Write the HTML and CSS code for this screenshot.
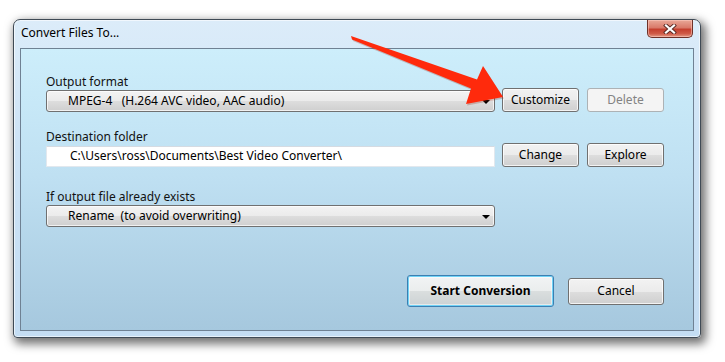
FILE: index.html
```html
<!DOCTYPE html>
<html>
<head>
<meta charset="utf-8">
<link rel="stylesheet" href="styles.css">
</head>
<body>
<div class="window">
  <div class="titlebar">
    <span class="title">Convert Files To...</span>
    <div class="close">
      <svg width="14" height="10" viewBox="0 0 14 10">
        <path d="M3 1.5 L11 8.5 M11 1.5 L3 8.5" stroke="#5a2a24" stroke-width="4" stroke-linecap="square" fill="none"/>
        <path d="M3 1.5 L11 8.5 M11 1.5 L3 8.5" stroke="#ffffff" stroke-width="2.2" stroke-linecap="square" fill="none"/>
      </svg>
    </div>
  </div>
  <div class="panel">
    <div class="label">Output format</div>
    <div class="row">
      <div class="combo"><span class="combo-text">MPEG-4   (H.264 AVC video, AAC audio)</span><span class="caret"></span></div>
      <button class="btn">Customize</button>
      <button class="btn disabled">Delete</button>
    </div>

    <div class="label second">Destination folder</div>
    <div class="row">
      <div class="input">C:\Users\ross\Documents\Best Video Converter\</div>
      <button class="btn">Change</button>
      <button class="btn">Explore</button>
    </div>

    <div class="label third">If output file already exists</div>
    <div class="row single">
      <div class="combo"><span class="combo-text">Rename  (to avoid overwriting)</span><span class="caret"></span></div>
    </div>

    <div class="actions">
      <button class="btn primary">Start Conversion</button>
      <button class="btn cancel">Cancel</button>
    </div>
  </div>
</div>
<svg class="arrow" width="725" height="362" viewBox="0 0 725 362">
  <polygon points="351,36 352,39.5 471,88.5 466,104 503,97 483,66 477,79.5" fill="#8a1a08" opacity="0.25" transform="translate(1,1.5)"/>
  <polygon points="351,36 352,39.5 471,88.5 466,104 503,97 483,66 477,79.5" fill="#ff2a0c"/>
</svg>
</body>
</html>
```

FILE: styles.css
```css
html, body {
  margin: 0;
  padding: 0;
  background: #ffffff;
}

body {
  position: relative;
  width: 725px;
  height: 362px;
  overflow: hidden;
  font-family: "Noto Sans", "Open Sans", "DejaVu Sans", sans-serif;
  font-size: 12px;
  color: #111;
}

.window {
  box-sizing: border-box;
  margin: 19px 0 0 13px;
  width: 688px;
  height: 319px;
  border: 1px solid #3f4a55;
  border-radius: 7px 7px 4px 4px;
  background: linear-gradient(180deg, #dcecf9 0%, #cde3f6 40%, #c4ddf3 100%);
  box-shadow: 3px 4px 10px 2px rgba(0, 0, 0, 0.55), inset 0 0 0 1px rgba(255,255,255,0.6);
  padding: 0 6px 6px 6px;
  display: flex;
  flex-direction: column;
}

.titlebar {
  height: 28px;
  display: flex;
  justify-content: space-between;
  align-items: flex-start;
}

.title {
  margin: 6px 0 0 1px;
  line-height: 14px;
  color: #000;
}

.close {
  box-sizing: border-box;
  width: 46px;
  height: 18px;
  margin-right: 1px;
  border: 1px solid #6e3128;
  border-top: none;
  border-radius: 0 0 5px 5px;
  background: linear-gradient(180deg, #e9a898 0%, #d97a6a 45%, #c5402f 55%, #cf5a47 80%, #e39a86 100%);
  box-shadow: inset 0 0 0 1px rgba(255, 210, 200, 0.5);
  display: flex;
  align-items: center;
  justify-content: center;
}

.close svg { display: block; }

.panel {
  flex: 1;
  box-sizing: border-box;
  border: 1px solid #6f8193;
  background: linear-gradient(180deg, #cdeefb 0%, #bfe0f2 45%, #a6c8de 100%);
  padding: 26px 29px 0 25px;
}

.label {
  height: 13px;
  line-height: 14px;
  white-space: pre;
}

.label.second { margin-top: 18px; }
.label.third { margin-top: 23px; }

.row {
  display: flex;
  align-items: flex-end;
  gap: 7px;
}

.row .btn + .btn { margin-left: 1px; }

.row.single { margin-top: 2px; }

.combo {
  box-sizing: border-box;
  width: 449px;
  height: 22px;
  border: 1px solid #707070;
  border-radius: 3px;
  background: linear-gradient(180deg, #f3f3f3 0%, #ebebeb 50%, #dddddd 51%, #cfcfcf 100%);
  box-shadow: inset 0 0 0 1px rgba(255,255,255,0.7);
  display: flex;
  align-items: center;
  justify-content: space-between;
  padding: 0 4px 0 21px;
}

.combo-text {
  white-space: pre;
  line-height: 14px;
  color: #000;
}

.caret {
  width: 0;
  height: 0;
  border-left: 4px solid transparent;
  border-right: 4px solid transparent;
  border-top: 4px solid #000;
  margin-top: 1px;
}

.input {
  box-sizing: border-box;
  width: 449px;
  height: 21px;
  background: #ffffff;
  border: 1px solid #e2e8ee;
  border-top-color: #d5dbe2;
  padding-left: 23px;
  line-height: 18px;
  white-space: pre;
  color: #000;
}

.btn {
  box-sizing: border-box;
  width: 77px;
  height: 24px;
  padding: 0;
  border: 1px solid #707070;
  border-radius: 3px;
  background: linear-gradient(180deg, #f2f2f2 0%, #ebebeb 50%, #dddddd 51%, #cfcfcf 100%);
  box-shadow: inset 0 0 0 1px rgba(255,255,255,0.75);
  font-family: inherit;
  font-size: 12px;
  color: #000;
  line-height: 14px;
}

.btn.disabled {
  border-color: #adb2b5;
  background: #f4f4f4;
  box-shadow: none;
  color: #838383;
}

.actions {
  margin-top: 48px;
  display: flex;
  justify-content: flex-end;
  align-items: center;
  gap: 14px;
}

.btn.primary {
  width: 147px;
  height: 32px;
  font-weight: bold;
  border-color: #3c7fb1;
  box-shadow: inset 0 0 0 1px #6fd3f7, inset 0 0 0 2px rgba(255,255,255,0.5);
  background: linear-gradient(180deg, #f2f4f5 0%, #eaeded 50%, #dadede 51%, #ccd2d4 100%);
}

.btn.cancel {
  width: 96px;
  height: 27px;
}

.arrow {
  position: absolute;
  left: 0;
  top: 0;
  pointer-events: none;
}
```
